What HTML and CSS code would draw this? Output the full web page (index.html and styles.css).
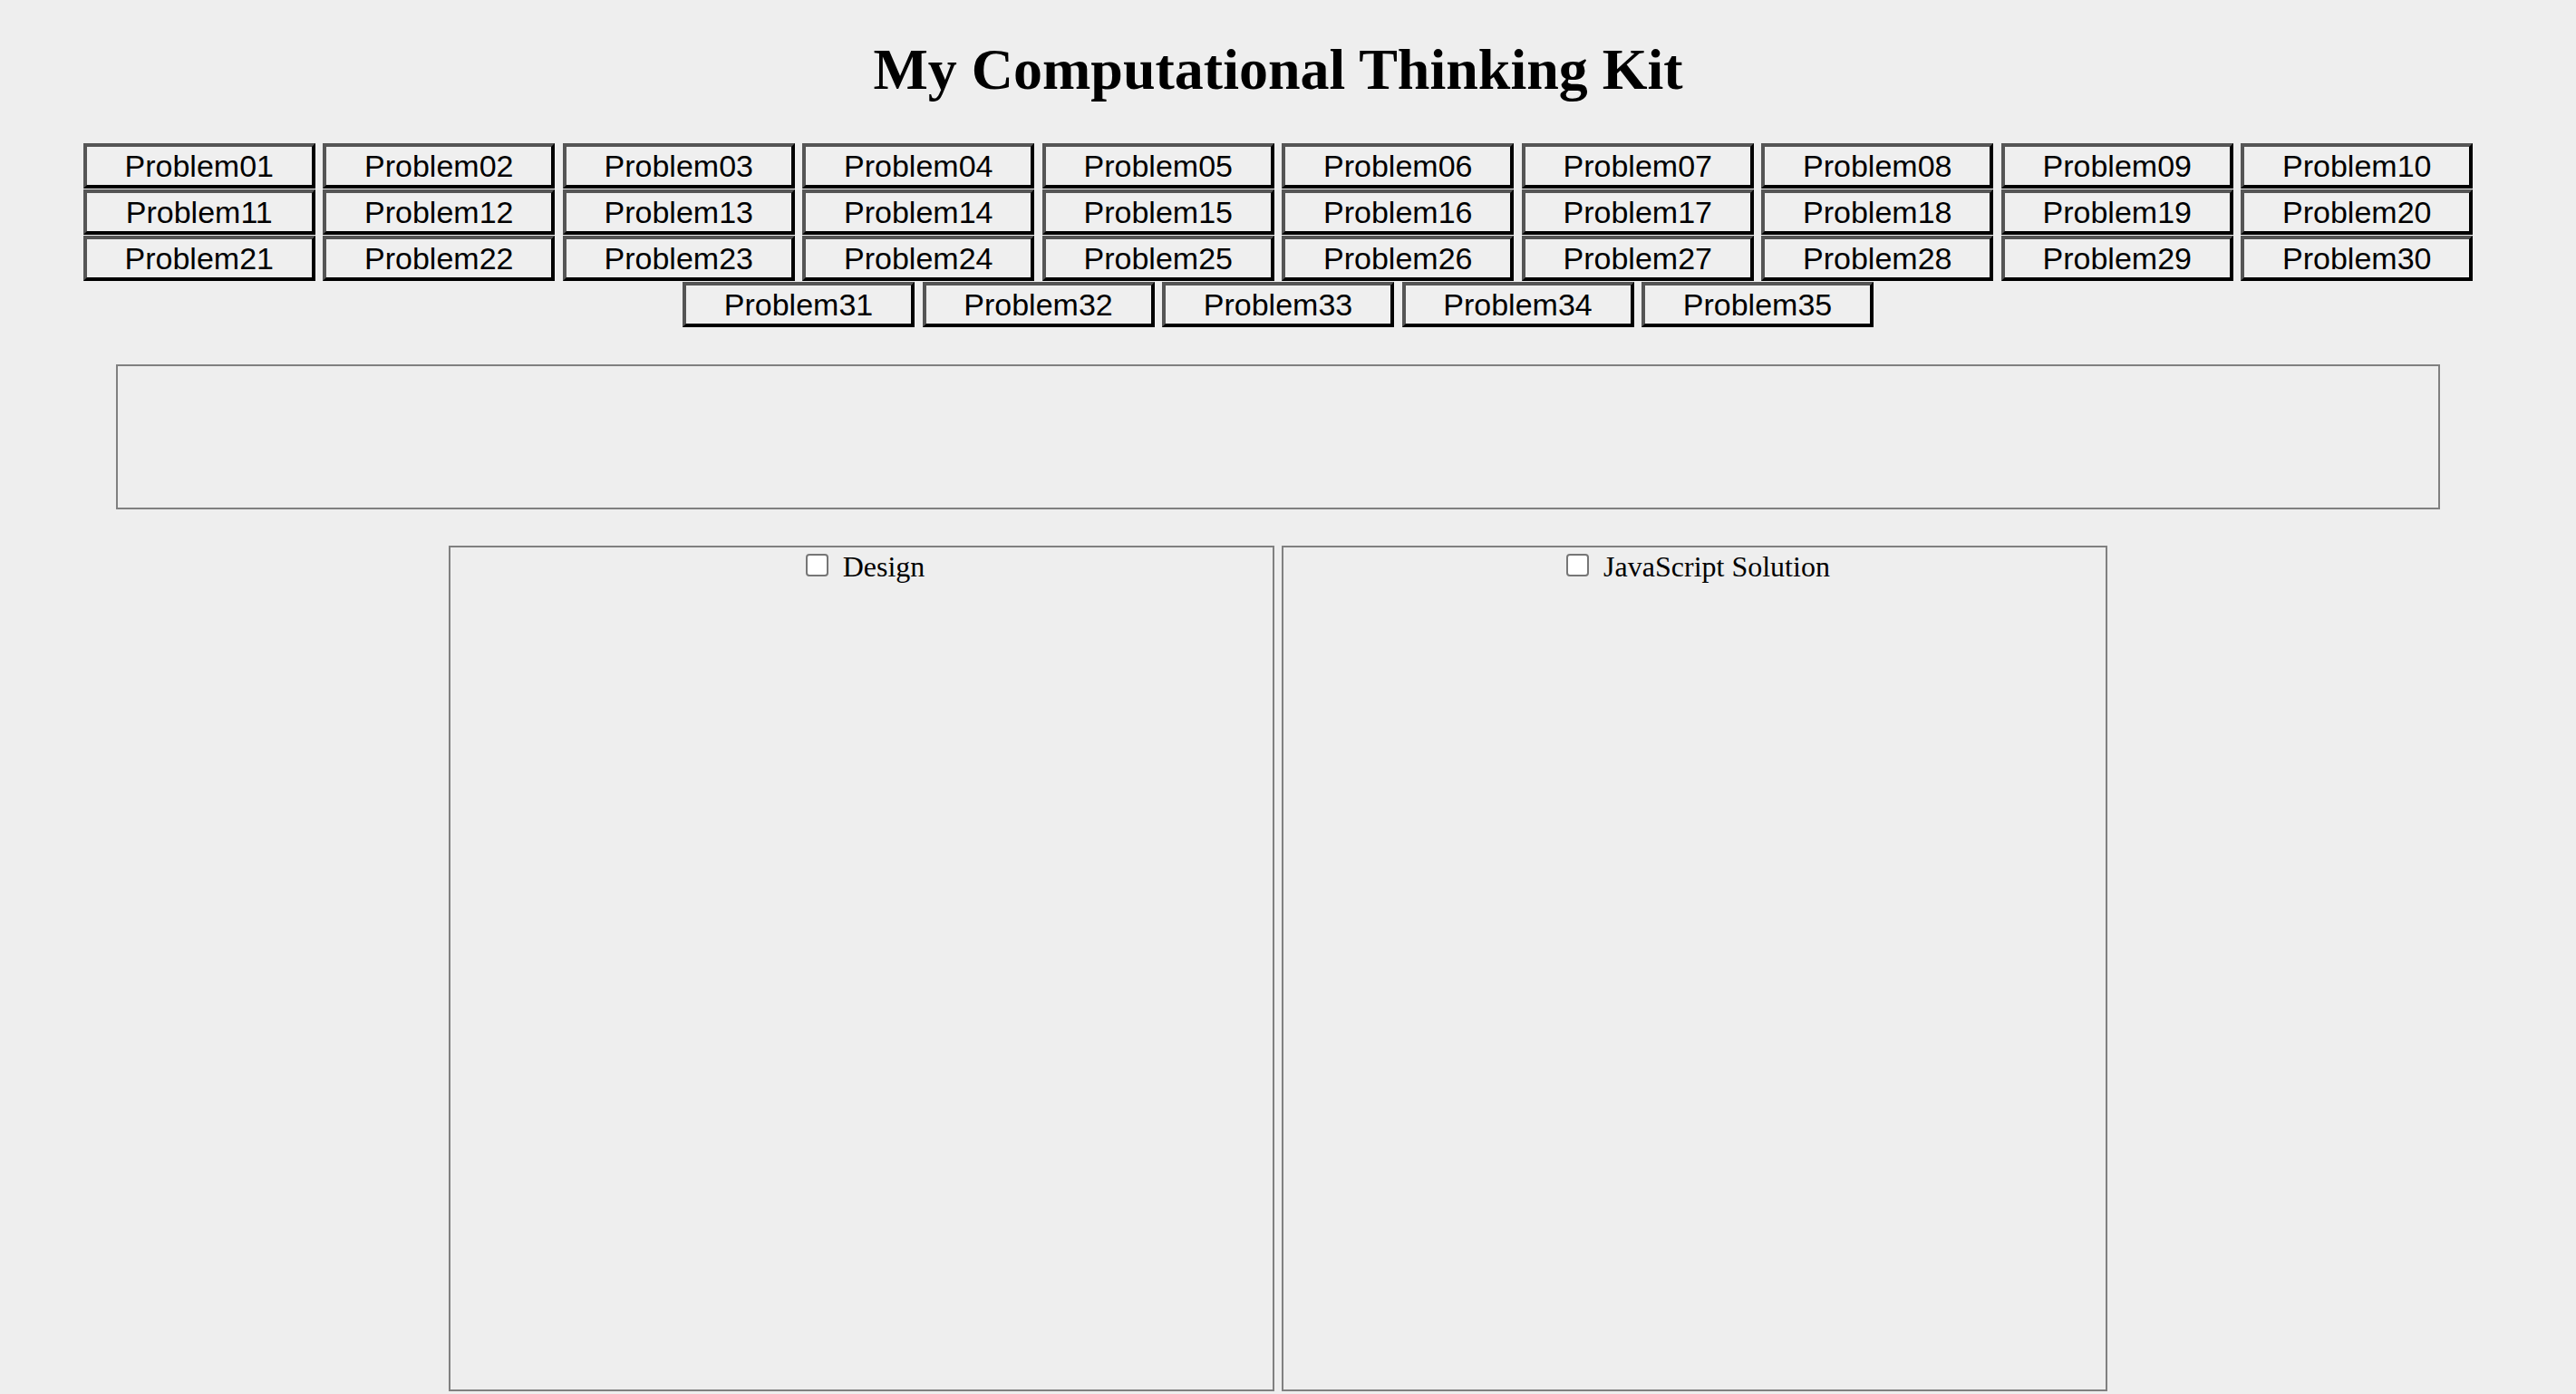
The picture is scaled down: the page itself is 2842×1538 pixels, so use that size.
FILE: index.html
```html
<!DOCTYPE html>
<html lang="en">
<head>
<meta charset="utf-8">
<title>My Computational Thinking Kit</title>
<link rel="stylesheet" href="styles.css">
</head>
<body>
<div class="page">
  <h1 class="title">My Computational Thinking Kit</h1>
  <div class="problems">
    <button class="problem-btn">Problem01</button>
    <button class="problem-btn">Problem02</button>
    <button class="problem-btn">Problem03</button>
    <button class="problem-btn">Problem04</button>
    <button class="problem-btn">Problem05</button>
    <button class="problem-btn">Problem06</button>
    <button class="problem-btn">Problem07</button>
    <button class="problem-btn">Problem08</button>
    <button class="problem-btn">Problem09</button>
    <button class="problem-btn">Problem10</button>
    <button class="problem-btn">Problem11</button>
    <button class="problem-btn">Problem12</button>
    <button class="problem-btn">Problem13</button>
    <button class="problem-btn">Problem14</button>
    <button class="problem-btn">Problem15</button>
    <button class="problem-btn">Problem16</button>
    <button class="problem-btn">Problem17</button>
    <button class="problem-btn">Problem18</button>
    <button class="problem-btn">Problem19</button>
    <button class="problem-btn">Problem20</button>
    <button class="problem-btn">Problem21</button>
    <button class="problem-btn">Problem22</button>
    <button class="problem-btn">Problem23</button>
    <button class="problem-btn">Problem24</button>
    <button class="problem-btn">Problem25</button>
    <button class="problem-btn">Problem26</button>
    <button class="problem-btn">Problem27</button>
    <button class="problem-btn">Problem28</button>
    <button class="problem-btn">Problem29</button>
    <button class="problem-btn">Problem30</button>
    <button class="problem-btn">Problem31</button>
    <button class="problem-btn">Problem32</button>
    <button class="problem-btn">Problem33</button>
    <button class="problem-btn">Problem34</button>
    <button class="problem-btn">Problem35</button>
  </div>
  <div class="statement"></div>
  <div class="panels">
    <div class="panel">
      <label class="panel-head"><input type="checkbox" class="toggle-box"><span>Design</span></label>
    </div>
    <div class="panel">
      <label class="panel-head"><input type="checkbox" class="toggle-box"><span>JavaScript Solution</span></label>
    </div>
  </div>
</div>
</body>
</html>
```

FILE: styles.css
```css
html, body {
  margin: 0;
  padding: 0;
  background: #eeeeee;
}

body {
  font-family: "Liberation Serif", "Times New Roman", serif;
  font-size: 32px;
  color: #000;
  overflow: hidden;
}

.page {
  padding: 0 38px 0 16px;
  display: flex;
  flex-direction: column;
  align-items: center;
}

.title {
  margin: 40px 0 44px 0;
  font-size: 64px;
  line-height: 74px;
  font-weight: bold;
  text-align: center;
}

.problems {
  width: 100%;
  display: flex;
  flex-wrap: wrap;
  justify-content: center;
  column-gap: 8.5px;
  row-gap: 1px;
}

.problem-btn {
  box-sizing: border-box;
  width: 256px;
  height: 50px;
  margin: 0;
  padding: 0;
  background: #efefef;
  border-style: solid;
  border-width: 4px;
  border-color: #555555 #000000 #000000 #555555;
  border-radius: 0;
  font-family: "Liberation Sans", Arial, sans-serif;
  font-size: 34px;
  line-height: 43px;
  color: #000;
  text-align: center;
}

.statement {
  box-sizing: border-box;
  width: 92%;
  height: 160px;
  margin-top: 41px;
  border: 2px solid #808080;
}

.panels {
  display: flex;
  justify-content: center;
  gap: 8px;
  margin-top: 40px;
}

.panel {
  box-sizing: border-box;
  width: 911px;
  height: 933px;
  border: 2px solid #808080;
  text-align: center;
}

.panel-head {
  display: block;
  padding-top: 3px;
  line-height: 37px;
}

.toggle-box {
  -webkit-appearance: none;
  appearance: none;
  box-sizing: border-box;
  width: 25px;
  height: 25px;
  margin: 0 16px 0 8px;
  background: #ffffff;
  border: 2px solid #767676;
  border-radius: 4px;
  vertical-align: baseline;
}
```
